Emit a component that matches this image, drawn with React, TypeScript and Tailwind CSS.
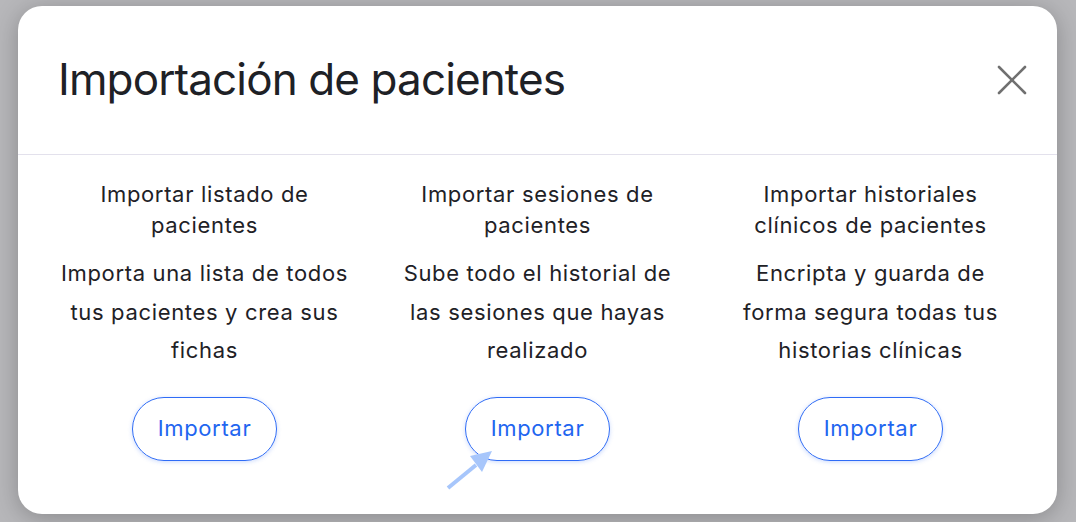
import { X } from 'lucide-react';

const options = [
  {
    title: 'Importar listado de pacientes',
    text: 'Importa una lista de todos tus pacientes y crea sus fichas',
  },
  {
    title: 'Importar sesiones de pacientes',
    text: 'Sube todo el historial de las sesiones que hayas realizado',
  },
  {
    title: 'Importar historiales clínicos de pacientes',
    text: 'Encripta y guarda de forma segura todas tus historias clínicas',
  },
];

export default function App() {
  return (
    <div
      className="w-[1076px] h-[522px] bg-[#b7b7ba] pt-[6px] pl-[18px] overflow-hidden"
      style={{ fontFamily: 'Inter, "Noto Sans", sans-serif' }}
    >
      <div className="relative w-[1039px] h-[508px] bg-white rounded-[24px] shadow-[0_4px_24px_rgba(0,0,0,0.25)] flex flex-col">
        <div className="h-[149px] flex items-center justify-between pl-[40px] pr-[19px] border-b border-[#e3e1ec]">
          <h1 className="text-[44px] tracking-[-0.02em] text-[#1e2126] leading-none pb-[2px]">
            Importación de pacientes
          </h1>
          <button className="text-[#707070]">
            <X className="w-[52px] h-[52px]" strokeWidth={1.2} />
          </button>
        </div>

        <div className="grid grid-cols-3 px-[20px] pt-[24px]">
          {options.map((o) => (
            <div key={o.title} className="flex flex-col items-center text-center text-[#1e2126]">
              <div className="w-[292px] text-[22px] leading-[31px] tracking-[0.03em]">{o.title}</div>
              <div className="w-[292px] mt-[13px] text-[22px] leading-[38.5px] tracking-[0.03em]">{o.text}</div>
              <button className="mt-[27px] w-[145px] h-[64px] rounded-full border border-[#2f6cf6] text-[#1f66f0] text-[22px] tracking-[0.03em] shadow-[0_1px_4px_rgba(47,108,246,0.25)]">
                Importar
              </button>
            </div>
          ))}
        </div>

        <svg
          className="absolute left-[428px] top-[440px]"
          width="50"
          height="46"
          viewBox="0 0 50 46"
        >
          <line x1="2" y1="42" x2="30" y2="19" stroke="#a7c6fb" strokeWidth="4" />
          <polygon points="46,5 24,10 36,26" fill="#a7c6fb" />
        </svg>
      </div>
    </div>
  );
}
